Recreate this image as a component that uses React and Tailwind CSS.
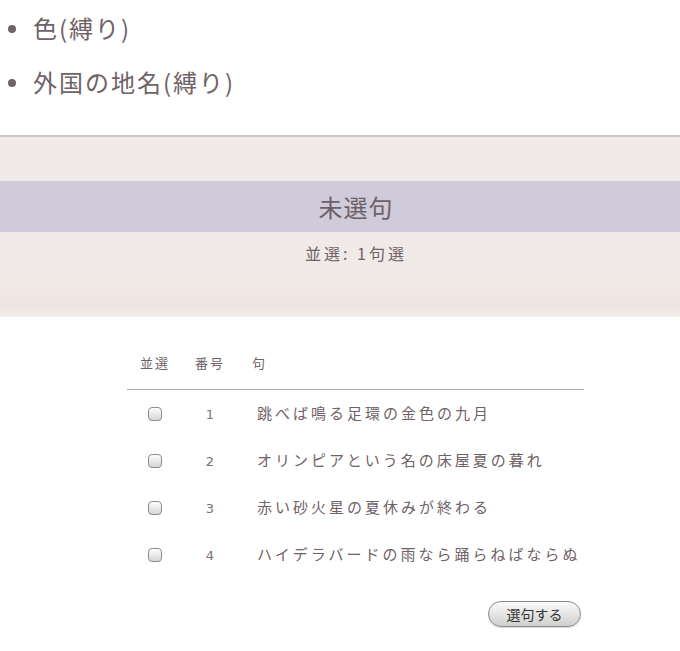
import React from "react";

const rows = [
  { n: 1, t: "跳べば鳴る足環の金色の九月" },
  { n: 2, t: "オリンピアという名の床屋夏の暮れ" },
  { n: 3, t: "赤い砂火星の夏休みが終わる" },
  { n: 4, t: "ハイデラバードの雨なら踊らねばならぬ" },
];

function Box() {
  return (
    <div className="w-[14px] h-[14px] rounded-[4px] border border-[#8c8c8c] bg-gradient-to-b from-[#fdfdfd] to-[#d6d6d6] shadow-[inset_0_1px_0_#ffffff]" />
  );
}

export default function App() {
  return (
    <div
      className="w-[680px] min-h-[651px] bg-white text-[#6f6367]"
      style={{ fontFamily: '"Noto Sans CJK JP", "Noto Sans", sans-serif' }}
    >
      <ul className="pt-[10px] pl-[33px] flex flex-col gap-[18px]">
        {["色(縛り)", "外国の地名(縛り)"].map((s) => (
          <li key={s} className="relative text-[24px] leading-[36px] tracking-[2px]">
            <span className="absolute left-[-25px] top-[15px] w-[8px] h-[8px] rounded-full bg-[#6f6367]" />
            {s}
          </li>
        ))}
      </ul>

      <div className="mt-[35px] border-t-2 border-[#cbc7bf] bg-[linear-gradient(to_bottom,#f0ebe8_0%,#f0ebe8_75%,#efe5e2_95%,#f3eeec_100%)] pt-[44px] pb-[52px]">
        <div className="h-[51px] bg-[#cfcbda] flex items-center justify-center pl-[32px] text-[24px] leading-none tracking-[1px] text-[#6c6065]">
          未選句
        </div>
        <div className="mt-[9px] pl-[32px] text-center text-[16px] leading-[24px] tracking-[3px]">
          並選: 1句選
        </div>
      </div>

      <div className="ml-[127px] w-[457px] mt-[29px]">
        <div className="flex h-[44px] pt-[8px] text-[13px] leading-[18px] tracking-[2px] border-b border-[#b3adab]">
          <div className="w-[56px] text-center">並選</div>
          <div className="w-[54px] text-center">番号</div>
          <div className="pl-[15px]">句</div>
        </div>
        {rows.map((r) => (
          <div key={r.n} className="flex h-[47px] items-center">
            <div className="w-[56px] flex justify-center">
              <Box />
            </div>
            <div className="w-[54px] text-center" style={{ fontFamily: '"DejaVu Sans", sans-serif' }}>
              <span className="text-[13px] text-[#7a7073]">{r.n}</span>
            </div>
            <div className="pl-[20px] text-[15px] tracking-[3px] whitespace-nowrap">{r.t}</div>
          </div>
        ))}
        <div className="flex justify-end mt-[23px] pr-[3px]">
          <button className="w-[93px] h-[26px] rounded-full border border-[#8a8a8a] bg-gradient-to-b from-[#fbfbfb] to-[#cfcfcf] text-[14px] leading-none text-[#333333] shadow-[0_1px_1px_rgba(0,0,0,0.15)]">
            選句する
          </button>
        </div>
      </div>
    </div>
  );
}
